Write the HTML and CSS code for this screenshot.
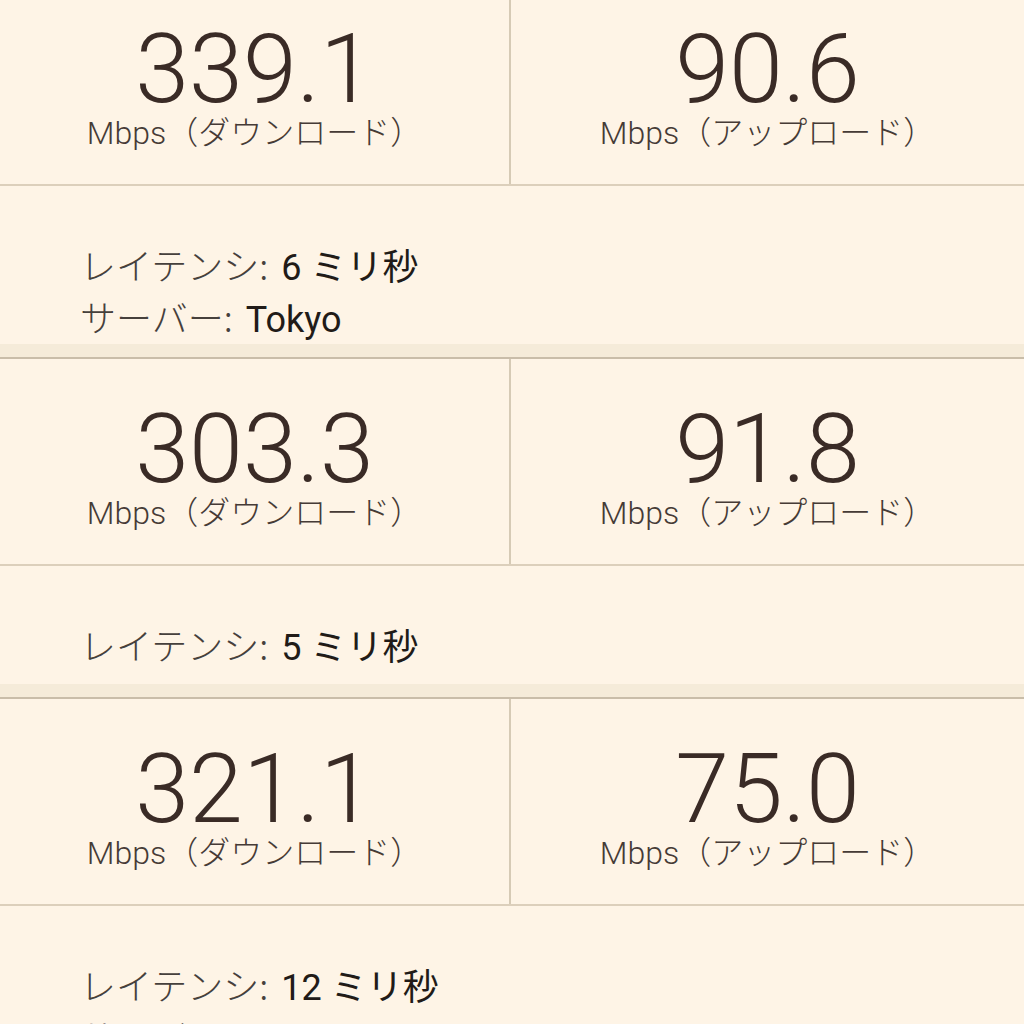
FILE: index.html
```html
<!DOCTYPE html>
<html lang="ja">
<head>
<meta charset="utf-8">
<title>スピードテスト履歴</title>
<link rel="stylesheet" href="styles.css">
</head>
<body>
<main class="list">
  <section class="result">
    <div class="speeds">
      <div class="speed">
        <div class="value">339.1</div>
        <div class="unit">Mbps（ダウンロード）</div>
      </div>
      <div class="speed">
        <div class="value">90.6</div>
        <div class="unit">Mbps（アップロード）</div>
      </div>
    </div>
    <div class="info two-lines">
      <p class="line"><span class="key">レイテンシ:</span><span class="val">6 ミリ秒</span></p>
      <p class="line"><span class="key">サーバー:</span><span class="val">Tokyo</span></p>
    </div>
    <div class="sep"></div>
  </section>
  <section class="result">
    <div class="speeds">
      <div class="speed">
        <div class="value">303.3</div>
        <div class="unit">Mbps（ダウンロード）</div>
      </div>
      <div class="speed">
        <div class="value">91.8</div>
        <div class="unit">Mbps（アップロード）</div>
      </div>
    </div>
    <div class="info one-line">
      <p class="line"><span class="key">レイテンシ:</span><span class="val">5 ミリ秒</span></p>
    </div>
    <div class="sep"></div>
  </section>
  <section class="result">
    <div class="speeds">
      <div class="speed">
        <div class="value">321.1</div>
        <div class="unit">Mbps（ダウンロード）</div>
      </div>
      <div class="speed">
        <div class="value">75.0</div>
        <div class="unit">Mbps（アップロード）</div>
      </div>
    </div>
    <div class="info two-lines">
      <p class="line"><span class="key">レイテンシ:</span><span class="val">12 ミリ秒</span></p>
      <p class="line"><span class="key">サーバー:</span><span class="val">Tokyo</span></p>
    </div>
    <div class="sep"></div>
  </section>
</main>
</body>
</html>
```

FILE: styles.css
```css
html, body {
  margin: 0;
  padding: 0;
  background: #fef4e6;
}

body {
  font-family: Roboto, "Noto Sans CJK JP", sans-serif;
  color: #3b2e29;
  overflow: hidden;
  height: 1024px;
}

.list {
  margin-top: -21px;
}

.speeds {
  display: grid;
  grid-template-columns: 511px 1fr;
  height: 205px;
  border-bottom: 2px solid #dccfbb;
}

.speed {
  display: flex;
  flex-direction: column;
  align-items: center;
  padding-top: 43px;
}

.speed:first-child {
  border-right: 2px solid #d6cab5;
}

.value {
  font-family: Roboto, "Helvetica Neue", sans-serif;
  font-weight: 300;
  font-size: 97px;
  line-height: 94px;
  height: 94px;
  color: #3a2b26;
}

.unit {
  font-family: Roboto, "Noto Sans CJK JP", sans-serif;
  font-weight: 300;
  font-size: 32px;
  line-height: 34px;
  height: 34px;
  color: #463b36;
  white-space: nowrap;
}

.info {
  padding: 52px 0 0 80px;
}

.info.two-lines {
  padding-bottom: 2px;
}

.info.one-line {
  padding-bottom: 14px;
}

.line {
  margin: 0;
  height: 52px;
  font-size: 36px;
  line-height: 52px;
  white-space: nowrap;
}

.key {
  font-family: "Noto Sans CJK JP", sans-serif;
  font-weight: 300;
  color: #46403c;
}

.val {
  font-family: Roboto, "Noto Sans CJK JP", sans-serif;
  font-weight: 400;
  color: #211b18;
  margin-left: 13px;
}

.sep {
  height: 13px;
  background: #f5ebd9;
  border-bottom: 2px solid #c9bda9;
}
```
